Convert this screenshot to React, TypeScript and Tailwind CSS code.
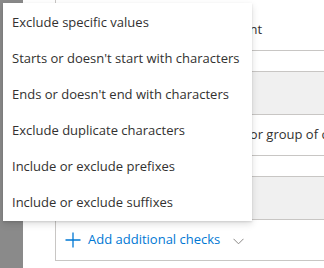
import React from "react";

const items = [
  "Exclude specific values",
  "Starts or doesn't start with characters",
  "Ends or doesn't end with characters",
  "Exclude duplicate characters",
  "Include or exclude prefixes",
  "Include or exclude suffixes",
];

export default function App() {
  return (
    <div
      className="relative flex w-[324px] h-[268px] overflow-hidden bg-white text-[#323130]"
      style={{ fontFamily: '"Segoe UI", "Open Sans", sans-serif' }}
    >
      <div className="w-[23px] shrink-0 bg-[#8a8a8a]" />
      <div className="flex-1 pl-[32px]">
        <div className="w-[320px] border-l border-b border-[#c8c6c4] flex flex-col">
          <div className="h-[51px] border-b border-[#c8c6c4] pt-[10px] flex items-center pl-[14px] text-[13px] whitespace-nowrap">
            Character type must be present
          </div>
          <div className="mt-[20px] h-[44px] border-y border-[#c8c6c4] bg-[#f0f0f0]" />
          <div className="h-[41px] border-b border-[#c8c6c4] flex items-center pl-[8px] text-[13px] whitespace-nowrap">
            Include or exclude a character or group of characters
          </div>
          <div className="mt-[20px] h-[44px] border-y border-[#c8c6c4] bg-[#f0f0f0]" />
          <div className="h-[40px] flex items-center pl-[9px] text-[13px] text-[#0078d4] whitespace-nowrap">
            <svg width="16" height="16" viewBox="0 0 16 16" className="mr-[7px]">
              <path d="M8 0.5V15.5M0.5 8H15.5" stroke="#0078d4" strokeWidth="1.3" fill="none" />
            </svg>
            <span>Add additional checks</span>
            <svg width="11" height="7" viewBox="0 0 11 7" className="ml-[13px] mt-[2px]">
              <path d="M0.5 0.8L5.5 5.8L10.5 0.8" stroke="#8a8886" strokeWidth="1" fill="none" />
            </svg>
          </div>
        </div>
      </div>
      <div
        className="absolute left-[3px] top-[3px] w-[249px] pt-[2px] bg-white flex flex-col"
        style={{ boxShadow: "0 3.2px 7.2px rgba(0,0,0,0.132), 0 0.6px 1.8px rgba(0,0,0,0.108)" }}
      >
        {items.map((t) => (
          <div key={t} className="h-[36px] flex items-center px-[9px] text-[13px] whitespace-nowrap">
            {t}
          </div>
        ))}
      </div>
    </div>
  );
}
